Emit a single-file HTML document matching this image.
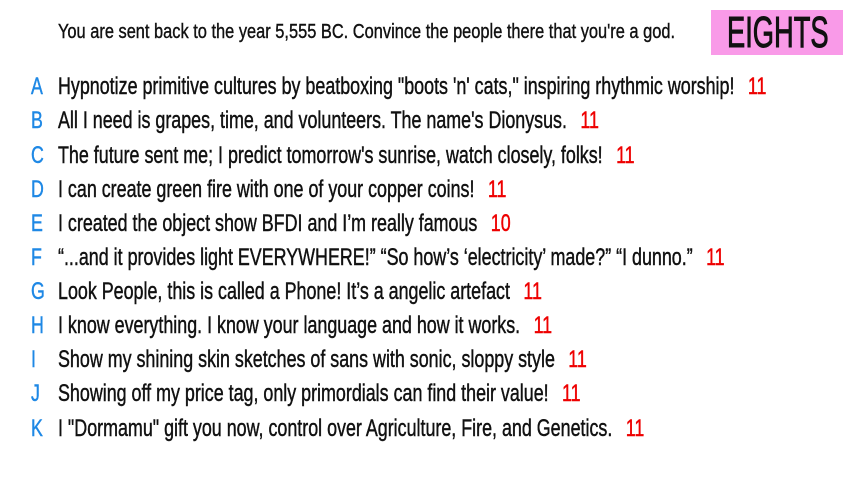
<!DOCTYPE html>
<html><head><meta charset="utf-8"><style>
body{margin:0;width:853px;height:480px;background:#fff;overflow:hidden;position:relative;font-family:"Liberation Sans",sans-serif;color:#111;}
.h{position:absolute;left:58px;top:21px;font-size:20px;white-space:nowrap;transform:scaleX(0.82);transform-origin:left;-webkit-text-stroke:0.4px #111;}
.box{position:absolute;left:711px;top:10px;width:132px;height:45px;background:#f99ae8;}
.box div{position:absolute;left:16px;top:0;font-size:44px;line-height:45px;transform:scaleX(0.62);transform-origin:left;-webkit-text-stroke:1px #111;white-space:nowrap;}
.r{position:absolute;left:0;height:34px;line-height:34px;font-size:24px;white-space:nowrap;-webkit-text-stroke:0.45px currentColor;}
.r b{position:absolute;left:31px;color:#1e88e5;font-weight:normal;transform:scaleX(0.74);transform-origin:left;}
.r span{position:absolute;left:58px;transform:scaleX(0.745);transform-origin:left;}
.r i{font-style:normal;color:#e00;margin-left:18px;}
</style></head><body>
<div class="h">You are sent back to the year 5,555 BC. Convince the people there that you're a god.</div>
<div class="box"><div>EIGHTS</div></div>
<div class="r" style="top:70px"><b>A</b><span>Hypnotize primitive cultures by beatboxing "boots 'n' cats," inspiring rhythmic worship!<i>11</i></span></div>
<div class="r" style="top:104px"><b>B</b><span>All I need is grapes, time, and volunteers. The name's Dionysus.<i>11</i></span></div>
<div class="r" style="top:139px"><b>C</b><span>The future sent me; I predict tomorrow's sunrise, watch closely, folks!<i>11</i></span></div>
<div class="r" style="top:173px"><b>D</b><span>I can create green fire with one of your copper coins!<i>11</i></span></div>
<div class="r" style="top:207px"><b>E</b><span>I created the object show BFDI and I’m really famous<i>10</i></span></div>
<div class="r" style="top:241px"><b>F</b><span>“...and it provides light EVERYWHERE!” “So how’s ‘electricity’ made?” “I dunno.”<i>11</i></span></div>
<div class="r" style="top:275px"><b>G</b><span>Look People, this is called a Phone! It’s a angelic artefact<i>11</i></span></div>
<div class="r" style="top:309px"><b>H</b><span>I know everything. I know your language and how it works.<i>11</i></span></div>
<div class="r" style="top:343px"><b>I</b><span>Show my shining skin sketches of sans with sonic, sloppy style<i>11</i></span></div>
<div class="r" style="top:377px"><b>J</b><span>Showing off my price tag, only primordials can find their value!<i>11</i></span></div>
<div class="r" style="top:412px"><b>K</b><span>I "Dormamu"  gift you now, control over Agriculture, Fire, and Genetics.<i>11</i></span></div>
</body></html>
